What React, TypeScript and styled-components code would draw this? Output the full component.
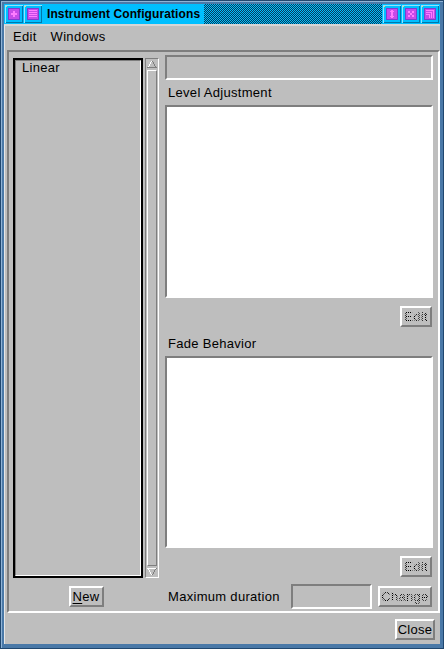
import React from "react";
import styled, { createGlobalStyle, css } from "styled-components";

const GRAY = "#bebebe";
const SHADOW = "#7e7e7e";
const LIGHT = "#ffffff";
const CYAN = "#00bfff";

const GlobalStyle = createGlobalStyle`
  html, body {
    margin: 0;
    padding: 0;
    background: ${GRAY};
  }
  body {
    font-family: "Liberation Sans", Arial, sans-serif;
    font-size: 13px;
    color: #000;
  }
`;

const sunken = css`
  border-style: solid;
  border-width: 2px;
  border-color: ${SHADOW} ${LIGHT} ${LIGHT} ${SHADOW};
`;

const raised = css`
  border-style: solid;
  border-width: 2px;
  border-color: ${LIGHT} ${SHADOW} ${SHADOW} ${LIGHT};
`;

const Frame = styled.div`
  box-sizing: border-box;
  width: 444px;
  height: 649px;
  display: flex;
  flex-direction: column;
  background: #4a79a8;
  border: 1px solid #20476f;
  padding: 3px 3px 4px 3px;
  box-shadow: inset 1px 1px 0 #8fb3d6;
`;

const TitleBar = styled.div`
  height: 20px;
  display: flex;
  align-items: center;
  background-color: ${CYAN};
  background-image: conic-gradient(#0b3b58 25%, ${CYAN} 0 50%, #0b3b58 0 75%, ${CYAN} 0);
  background-size: 2px 2px;
`;

const TitleLabel = styled.div`
  height: 20px;
  display: flex;
  align-items: center;
  background: ${CYAN};
  padding: 0 4px 0 4px;
  font-weight: bold;
  font-size: 12px;
  letter-spacing: 0.1px;
`;

const TitleGroup = styled.div`
  display: flex;
  gap: 1px;
  height: 20px;
  align-items: center;
  background: ${CYAN};
  padding: 0 1px;
`;

const Spacer = styled.div`
  flex: 1;
`;

const Client = styled.div`
  flex: 1;
  display: flex;
  flex-direction: column;
  background: ${GRAY};
  border-top: 2px solid #d6d6d6;
  border-left: 1px solid #e6e6e6;
`;

const MenuBar = styled.div`
  height: 21px;
  display: flex;
  align-items: center;
  gap: 14px;
  padding-left: 8px;
  letter-spacing: 0.3px;
`;

const Body = styled.div`
  flex: 1;
  display: flex;
  flex-direction: column;
  padding: 3px 0 0 2px;
`;

const Panel = styled.div`
  ${sunken};
  height: 563px;
  box-sizing: border-box;
  display: grid;
  grid-template-columns: 146px 1fr;
  grid-template-rows: 1fr 25px;
  column-gap: 6px;
  row-gap: 3px;
  padding: 3px 5px 2px 4px;
`;

const LeftColumn = styled.div`
  display: flex;
  gap: 2px;
  padding: 3px 0;
  min-height: 0;
`;

const List = styled.div`
  flex: 1;
  box-sizing: border-box;
  border: 2px solid #000;
  display: flex;
`;

const ListInner = styled.div`
  flex: 1;
  border-style: solid;
  border-width: 1px;
  border-color: ${SHADOW} ${LIGHT} ${LIGHT} ${SHADOW};
  padding: 0 5px 0 6px;
  letter-spacing: 0.3px;
  line-height: 14px;
`;

const Trough = styled.div`
  width: 14px;
  box-sizing: border-box;
  display: flex;
  flex-direction: column;
  border-style: solid;
  border-width: 1px;
  border-color: ${SHADOW} ${LIGHT} ${LIGHT} ${SHADOW};
`;

const Arrow = styled.div`
  height: 10px;
  display: flex;
  justify-content: center;
  align-items: center;
`;

const Thumb = styled.div`
  flex: 1;
  margin: 1px 1px;
  border-style: solid;
  border-width: 1px;
  border-color: ${LIGHT} ${SHADOW} ${SHADOW} ${LIGHT};
`;

const RightColumn = styled.div`
  display: flex;
  flex-direction: column;
  min-height: 0;
`;

const TextField = styled.div<{ $w?: number }>`
  ${sunken};
  box-sizing: border-box;
  height: 25px;
  width: ${(p) => (p.$w ? `${p.$w}px` : "auto")};
`;

const Label = styled.div`
  height: 25px;
  display: flex;
  align-items: center;
  padding-left: 3px;
  letter-spacing: 0.3px;
`;

const WhiteBox = styled.div`
  ${sunken};
  flex: 1;
  background: ${LIGHT};
`;

const ButtonRow = styled.div<{ $h: number }>`
  height: ${(p) => p.$h}px;
  display: flex;
  justify-content: flex-end;
  align-items: flex-start;
  padding: 8px 1px 0 0;
  box-sizing: border-box;
`;

const Button = styled.div<{ $w: number; $disabled?: boolean }>`
  ${raised};
  box-sizing: border-box;
  width: ${(p) => p.$w}px;
  height: 21px;
  display: flex;
  align-items: center;
  justify-content: center;
  letter-spacing: 0.3px;
  ${(p) =>
    p.$disabled &&
    css`
      & > span {
        color: transparent;
        background-image: conic-gradient(#000 25%, transparent 0 50%, #000 0 75%, transparent 0);
        background-size: 2px 2px;
        -webkit-background-clip: text;
        background-clip: text;
      }
    `}
`;

const Mnemonic = styled.u`
  text-decoration-thickness: 1px;
  text-underline-offset: 2px;
`;

const NewCell = styled.div`
  display: flex;
  justify-content: center;
  align-items: center;
`;

const DurationRow = styled.div`
  display: flex;
  align-items: center;
  gap: 6px;
  padding-right: 1px;
`;

const DurationLabel = styled.div`
  flex: 1;
  padding-left: 3px;
  letter-spacing: 0.3px;
`;

const BottomBar = styled.div`
  flex: 1;
  display: flex;
  justify-content: flex-end;
  align-items: flex-start;
  padding: 6px 5px 0 0;
`;

type IconKind = "menu" | "list" | "resize" | "close" | "max";

function TitleIcon({ kind }: { kind: IconKind }) {
  const pink = "#ff7cff";
  return (
    <svg width="18" height="18" viewBox="0 0 18 18" shapeRendering="crispEdges">
      <rect x="0" y="0" width="18" height="18" fill={CYAN} />
      <path d="M0 0H18V1H1V18H0Z" fill="#8fe3ff" />
      <path d="M17 1H18V18H1V17H17Z" fill="#0077aa" />
      <rect x="3" y="3" width="12" height="12" fill="#7a3fd0" />
      <rect x="4" y="4" width="10" height="10" fill="#c64be8" />
      <rect x="1" y="1" width="1" height="1" fill="#e8e070" />
      {kind === "menu" && <path d="M8 6H10V8H12V10H10V12H8V10H6V8H8Z" fill={pink} />}
      {kind === "list" && (
        <g fill={pink}>
          <rect x="5" y="5" width="8" height="1" />
          <rect x="5" y="7" width="8" height="1" />
          <rect x="5" y="9" width="8" height="1" />
          <rect x="5" y="11" width="8" height="1" />
        </g>
      )}
      {kind === "resize" && <path d="M9 4L11 7H10V11H11L9 14L7 11H8V7H7Z" fill={pink} />}
      {kind === "close" && (
        <g fill={pink}>
          <rect x="6" y="6" width="2" height="2" />
          <rect x="10" y="6" width="2" height="2" />
          <rect x="8" y="8" width="2" height="2" />
          <rect x="6" y="10" width="2" height="2" />
          <rect x="10" y="10" width="2" height="2" />
        </g>
      )}
      {kind === "max" && (
        <path
          d="M5 5H13V13H12V6H5ZM5 7H11V13H10V8H5ZM5 9H9V13H8V10H5Z"
          fill={pink}
        />
      )}
    </svg>
  );
}

function ArrowGlyph({ up }: { up?: boolean }) {
  return (
    <svg width="10" height="8" viewBox="0 0 10 8" shapeRendering="crispEdges">
      {up ? (
        <>
          <path d="M5 0L10 8H0Z" fill={GRAY} />
          <path d="M5 0L0 8H1L5 1.6Z" fill={LIGHT} />
          <path d="M5 0L10 8H0V7H8.4L5 1.6Z" fill={SHADOW} />
        </>
      ) : (
        <>
          <path d="M0 0H10L5 8Z" fill={GRAY} />
          <path d="M0 0H10V1H1.6L5 6.4V8Z" fill={LIGHT} />
          <path d="M10 0L5 8V6.4L9 0Z" fill={SHADOW} />
        </>
      )}
    </svg>
  );
}

export default function App() {
  return (
    <>
      <GlobalStyle />
      <Frame>
        <TitleBar>
          <TitleGroup>
            <TitleIcon kind="menu" />
            <TitleIcon kind="list" />
          </TitleGroup>
          <TitleLabel>Instrument Configurations</TitleLabel>
          <Spacer />
          <TitleGroup>
            <TitleIcon kind="resize" />
            <TitleIcon kind="close" />
            <TitleIcon kind="max" />
          </TitleGroup>
        </TitleBar>
        <Client>
          <MenuBar>
            <span>Edit</span>
            <span>Windows</span>
          </MenuBar>
          <Body>
            <Panel>
              <LeftColumn>
                <List>
                  <ListInner>Linear</ListInner>
                </List>
                <Trough>
                  <Arrow>
                    <ArrowGlyph up />
                  </Arrow>
                  <Thumb />
                  <Arrow>
                    <ArrowGlyph />
                  </Arrow>
                </Trough>
              </LeftColumn>
              <RightColumn>
                <TextField />
                <Label>Level Adjustment</Label>
                <WhiteBox />
                <ButtonRow $h={33}>
                  <Button $w={32} $disabled>
                    <span>Edit</span>
                  </Button>
                </ButtonRow>
                <Label>Fade Behavior</Label>
                <WhiteBox />
                <ButtonRow $h={33}>
                  <Button $w={32} $disabled>
                    <span>Edit</span>
                  </Button>
                </ButtonRow>
              </RightColumn>
              <NewCell>
                <Button $w={35}>
                  <span>
                    <Mnemonic>N</Mnemonic>ew
                  </span>
                </Button>
              </NewCell>
              <DurationRow>
                <DurationLabel>Maximum duration</DurationLabel>
                <TextField $w={81} />
                <Button $w={54} $disabled>
                  <span>Change</span>
                </Button>
              </DurationRow>
            </Panel>
            <BottomBar>
              <Button $w={40}>
                <span>Close</span>
              </Button>
            </BottomBar>
          </Body>
        </Client>
      </Frame>
    </>
  );
}
